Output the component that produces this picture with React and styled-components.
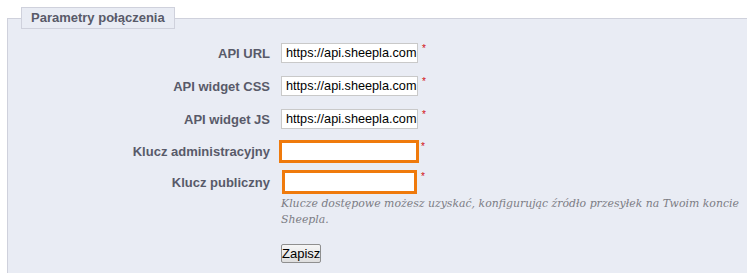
import React from "react";
import styled, { createGlobalStyle } from "styled-components";

const GlobalStyle = createGlobalStyle`
  body {
    margin: 0;
    background: #ffffff;
    font-family: "Liberation Sans", Arial, sans-serif;
  }
`;

const Fieldset = styled.fieldset`
  margin: 7px -30px 0 7px;
  padding: 0 0 10px 0;
  border: 1px solid #cfd1dc;
  border-bottom: none;
  background: #e9ecf4;
  min-width: 0;
`;

const Legend = styled.legend`
  margin-left: 13px;
  padding: 3px 9px 3px 9px;
  border: 1px solid #cfd1dc;
  background: #e9ecf4;
  color: #585a69;
  font-size: 13px;
  font-weight: bold;
  line-height: 14px;
`;

const Form = styled.div`
  padding-top: 14px;
`;

const Row = styled.div`
  display: flex;
  align-items: center;
  margin-top: ${(p) => p.$mt || 0}px;
`;

const Label = styled.label`
  width: 262px;
  text-align: right;
  color: #585a69;
  font-size: 13px;
  font-weight: bold;
  margin-right: ${(p) => p.$gap || 11}px;
`;

const TextInput = styled.input`
  box-sizing: border-box;
  width: 137px;
  height: 20px;
  padding: 0 0 0 4px;
  border: 1px solid #c9c9c9;
  background: #fff;
  color: #000;
  font-family: "Liberation Sans", Arial, sans-serif;
  font-size: 12.7px;
  outline: none;
`;

const KeyInput = styled.input`
  box-sizing: border-box;
  width: ${(p) => p.$w}px;
  height: ${(p) => p.$h}px;
  padding: 0 4px;
  border: 3px solid #ef7a0c;
  background: #fff;
  font-size: 13px;
  outline: none;
`;

const Required = styled.sup`
  align-self: flex-start;
  margin-left: ${(p) => p.$ml || 4}px;
  margin-top: ${(p) => p.$mt || 0}px;
  color: #d21010;
  font-size: 10px;
  line-height: 10px;
  vertical-align: top;
`;

const Help = styled.p`
  margin: 2px 0 0 273px;
  width: 470px;
  color: #7c7c84;
  font-family: "DejaVu Serif", "Liberation Serif", serif;
  font-style: italic;
  font-size: 10.9px;
  line-height: 16px;
`;

const Actions = styled.div`
  margin: 16px 0 0 273px;
`;

const Button = styled.button`
  box-sizing: border-box;
  width: 40px;
  height: 19px;
  padding: 0;
  border: 1px solid #8f8f8f;
  border-radius: 2px;
  background: linear-gradient(#f6f6f6, #dedede);
  color: #000;
  font-family: "Liberation Sans", Arial, sans-serif;
  font-size: 13px;
  line-height: 17px;
`;

const urlFields = [
  { label: "API URL", mt: 0 },
  { label: "API widget CSS", mt: 13 },
  { label: "API widget JS", mt: 13 },
];

export default function App() {
  return (
    <>
      <GlobalStyle />
      <Fieldset>
        <Legend>Parametry połączenia</Legend>
        <Form>
          {urlFields.map((f) => (
            <Row key={f.label} $mt={f.mt}>
              <Label>{f.label}</Label>
              <TextInput defaultValue="https://api.sheepla.com" />
              <Required $mt={1}>*</Required>
            </Row>
          ))}
          <Row $mt={11}>
            <Label $gap={9}>Klucz administracyjny</Label>
            <KeyInput $w={140} $h={23} />
            <Required $ml={2} $mt={2}>*</Required>
          </Row>
          <Row $mt={7}>
            <Label $gap={12}>Klucz publiczny</Label>
            <KeyInput $w={135} $h={24} />
            <Required $ml={4} $mt={2}>*</Required>
          </Row>
          <Help>
            Klucze dostępowe możesz uzyskać, konfigurując źródło przesyłek na
            Twoim koncie Sheepla.
          </Help>
          <Actions>
            <Button>Zapisz</Button>
          </Actions>
        </Form>
      </Fieldset>
    </>
  );
}
